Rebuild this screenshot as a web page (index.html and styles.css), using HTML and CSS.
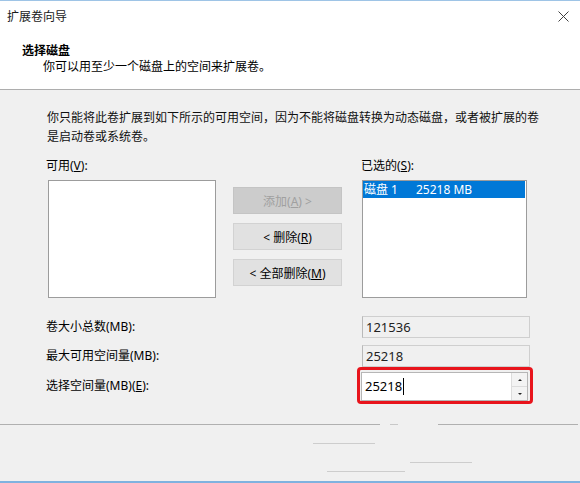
FILE: index.html
```html
<!DOCTYPE html>
<html lang="zh-CN">
<head>
    <meta charset="UTF-8">
    <meta name="viewport" content="width=device-width, initial-scale=1.0">
    <title>扩展卷向导</title>
    <link rel="stylesheet" href="styles.css">
</head>
<body>
    <div class="window">
        <div class="top-line"></div>
        <div class="titlebar">
            <span class="title">扩展卷向导</span>
            <span class="close">
                <svg width="11" height="11" viewBox="0 0 11 11">
                    <path d="M0.5 0.5 L10.5 10.5 M10.5 0.5 L0.5 10.5" stroke="#404040" stroke-width="1" fill="none"/>
                </svg>
            </span>
        </div>

        <div class="header">
            <div class="header-title">选择磁盘</div>
            <div class="header-sub">你可以用至少一个磁盘上的空间来扩展卷。</div>
        </div>

        <div class="content">
            <p class="intro">你只能将此卷扩展到如下所示的可用空间，因为不能将磁盘转换为动态磁盘，或者被扩展的卷<br>是启动卷或系统卷。</p>

            <div class="picker">
                <div class="picker-label">可用(<u>V</u>):</div>
                <div></div>
                <div class="picker-label right">已选的(<u>S</u>):</div>

                <div class="listbox"></div>
                <div class="buttons">
                    <button class="btn" disabled>添加(<u>A</u>) &gt;</button>
                    <button class="btn">&lt; 删除(<u>R</u>)</button>
                    <button class="btn">&lt; 全部删除(<u>M</u>)</button>
                </div>
                <div class="listbox">
                    <div class="list-item selected">
                        <span class="disk-name">磁盘 1</span>
                        <span>25218 MB</span>
                    </div>
                </div>
            </div>

            <div class="fields">
                <div class="field-row">
                    <span class="field-label">卷大小总数(MB):</span>
                    <div class="readonly">121536</div>
                </div>
                <div class="field-row">
                    <span class="field-label">最大可用空间量(MB):</span>
                    <div class="readonly">25218</div>
                </div>
                <div class="field-row tall">
                    <span class="field-label">选择空间量(MB)(<u>E</u>):</span>
                    <div class="highlight">
                        <div class="spinbox">
                            <span class="spin-value">25218</span>
                            <div class="spin-buttons">
                                <span class="spin-up"></span>
                                <span class="spin-down"></span>
                            </div>
                        </div>
                    </div>
                </div>
            </div>

            <div class="footer">
                <div class="separator">
                    <span class="seg seg-a"></span>
                    <span class="seg seg-b"></span>
                    <span class="seg seg-c"></span>
                </div>
                <div class="smudge smudge-1"></div>
                <div class="smudge smudge-2"></div>
                <div class="smudge smudge-3"></div>
            </div>
        </div>
        <div class="bottom-line"></div>
    </div>
</body>
</html>
```

FILE: styles.css
```css
* {
    margin: 0;
    padding: 0;
    box-sizing: border-box;
}

body {
    width: 580px;
    height: 483px;
    overflow: hidden;
    background-color: #f0f0f0;
    color: #000;
    font-family: "Noto Sans", "Noto Sans CJK SC", sans-serif;
    font-size: 12px;
}

.window {
    width: 580px;
    height: 483px;
    display: flex;
    flex-direction: column;
}

.top-line {
    height: 1px;
    background-color: #9ec4e6;
}

.titlebar {
    height: 30px;
    background-color: #fff;
    display: flex;
    align-items: center;
    justify-content: space-between;
    padding: 1px 11px 0 7px;
}

.title {
    font-size: 12px;
    line-height: 16px;
    color: #1a1a1a;
}

.close {
    display: flex;
}

.header {
    background-color: #fff;
    padding: 12px 0 14px 22px;
    border-bottom: 1px solid #adadad;
}

.header-title {
    font-weight: bold;
    line-height: 16px;
}

.header-sub {
    line-height: 16px;
    padding-left: 21px;
}

.content {
    padding-top: 17px;
    flex: 1;
}

.intro {
    font-family: "Noto Sans CJK SC", sans-serif;
    font-size: 12px;
    line-height: 19px;
    white-space: nowrap;
    margin-left: 47px;
    color: #111;
}

.picker {
    display: grid;
    grid-template-columns: 168px 109px 168px;
    grid-template-rows: 16px 118px;
    column-gap: 17px;
    row-gap: 6px;
    margin: 13px 0 0 48px;
}

.picker > .listbox:last-child {
    margin-left: 3px;
}

.picker-label {
    line-height: 16px;
    margin-left: -2px;
}

.picker-label.right {
    margin-left: 2px;
}

.listbox {
    background-color: #fff;
    border: 1px solid #9c9c9c;
    padding: 0 1px 0 0;
}

.list-item {
    height: 17px;
    line-height: 17px;
    padding-left: 1px;
    display: flex;
}

.list-item.selected {
    background-color: #0078d7;
    color: #fff;
}

.disk-name {
    width: 52px;
}

.buttons {
    display: flex;
    flex-direction: column;
    gap: 9px;
    padding-top: 7px;
}

.btn {
    height: 27px;
    font-family: inherit;
    font-size: 12px;
    color: #000;
    background-color: #e1e1e1;
    border: 1px solid #d2d2d2;
}

.btn:disabled {
    background-color: #cccccc;
    border-color: #c4c4c4;
    color: #a0a0a0;
}

.fields {
    margin: 18px 0 0 46px;
    display: flex;
    flex-direction: column;
    gap: 7px;
}

.field-row {
    display: flex;
    align-items: center;
    height: 22px;
}

.field-row.tall {
    height: 37px;
    margin-top: -7px;
}

.field-label {
    width: 316px;
    line-height: 16px;
}

.readonly {
    width: 168px;
    height: 22px;
    line-height: 20px;
    border: 1px solid #cfcfcf;
    border-left-color: #b9b9b9;
    padding-left: 3px;
    color: #222;
    font-size: 13px;
}

.highlight {
    width: 176px;
    height: 37px;
    margin-left: -5px;
    border: 3px solid #e8141c;
    border-radius: 4px;
    padding: 2px 2px 0 1px;
}

.spinbox {
    height: 29px;
    display: flex;
    background-color: #fff;
    border: 1px solid #b6b6b6;
}

.spin-value {
    flex: 1;
    padding-left: 3px;
    line-height: 27px;
    font-size: 13px;
}

.spin-value::after {
    content: "";
    display: inline-block;
    width: 1px;
    height: 17px;
    background-color: #000;
    margin-left: 1px;
    vertical-align: -4px;
}

.spin-buttons {
    width: 16px;
    display: flex;
    flex-direction: column;
    border-left: 1px solid #dcdcdc;
}

.spin-up,
.spin-down {
    flex: 1;
    display: flex;
    align-items: center;
    justify-content: center;
    background-color: #f3f3f3;
}

.spin-up {
    border-bottom: 1px solid #dcdcdc;
}

.spin-up::before {
    content: "";
    border-left: 2px solid transparent;
    border-right: 2px solid transparent;
    border-bottom: 2px solid #222;
}

.spin-down::before {
    content: "";
    border-left: 2px solid transparent;
    border-right: 2px solid transparent;
    border-top: 2px solid #222;
}

.footer {
    margin-top: 20px;
}

.separator {
    display: flex;
    height: 1px;
}

.seg {
    height: 1px;
    background-color: #b0b0b0;
}

.seg-a {
    width: 380px;
}

.seg-b {
    width: 8px;
    margin-left: 10px;
    background-color: #c8c8c8;
}

.seg-c {
    width: 140px;
    margin-left: 40px;
}

.smudge {
    height: 1px;
    background-color: #cdcdcd;
}

.smudge-1 {
    width: 62px;
    margin: 18px 0 0 313px;
}

.smudge-2 {
    width: 62px;
    margin: 18px 0 0 410px;
}

.smudge-3 {
    width: 78px;
    margin: 8px 0 0 327px;
}

.bottom-line {
    height: 2px;
    background-color: #7fb2df;
}
```
